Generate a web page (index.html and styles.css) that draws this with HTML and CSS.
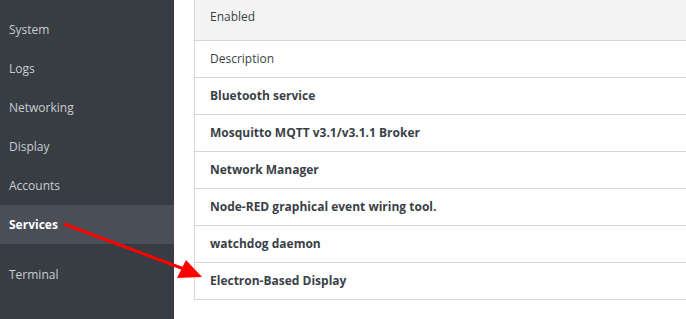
FILE: index.html
```html
<!DOCTYPE html>
<html lang="en">
<head>
    <meta charset="UTF-8">
    <meta name="viewport" content="width=device-width, initial-scale=1.0">
    <title>Services</title>
    <link rel="stylesheet" href="styles.css">
</head>
<body>
<div class="page">
    <div class="sidebar">
        <div class="nav-item">System</div>
        <div class="nav-item">Logs</div>
        <div class="nav-item">Networking</div>
        <div class="nav-item">Display</div>
        <div class="nav-item">Accounts</div>
        <div class="nav-item active">Services</div>
        <div class="nav-item nav-group">Terminal</div>
    </div>

    <div class="content">
        <div class="service-table">
            <div class="row header-row">Enabled</div>
            <div class="row">Description</div>
            <div class="row service">Bluetooth service</div>
            <div class="row service">Mosquitto MQTT v3.1/v3.1.1 Broker</div>
            <div class="row service">Network Manager</div>
            <div class="row service">Node-RED graphical event wiring tool.</div>
            <div class="row service">watchdog daemon</div>
            <div class="row service">Electron-Based Display</div>
        </div>
    </div>
</div>

<!-- arrow annotation -->
<svg class="arrow" width="686" height="319" viewBox="0 0 686 319">
    <line x1="64" y1="224" x2="184" y2="269" stroke="#ff0000" stroke-width="3"/>
    <polygon points="202,277 177,278 186,260" fill="#ff0000"/>
</svg>
</body>
</html>
```

FILE: styles.css
```css
body {
    margin: 0;
    font-family: "Open Sans", "Liberation Sans", sans-serif;
    font-size: 12px;
    background-color: #fff;
    overflow: hidden;
}
.page {
    display: flex;
    height: 319px;
}
.sidebar {
    width: 174px;
    flex-shrink: 0;
    background-color: #383c43;
    padding-top: 10px;
}
.nav-item {
    height: 39px;
    line-height: 39px;
    padding-left: 9px;
    color: #c9cdd2;
}
.nav-item.active {
    background-color: #4a4f57;
    color: #fff;
    font-weight: bold;
}
.nav-group {
    margin-top: 11px;
}
.content {
    flex: 1;
    padding-left: 20px;
    overflow: hidden;
}
.service-table {
    border-left: 1px solid #d6d6d6;
    width: 560px;
}
.row {
    height: 36px;
    line-height: 35px;
    padding-left: 15px;
    border-bottom: 1px solid #d6d6d6;
    color: #3a3f47;
}
.header-row {
    height: 40px;
    line-height: 34px;
    background-color: #f4f4f4;
}
.service {
    font-weight: bold;
}
.arrow {
    position: absolute;
    left: 0;
    top: 0;
}
```
